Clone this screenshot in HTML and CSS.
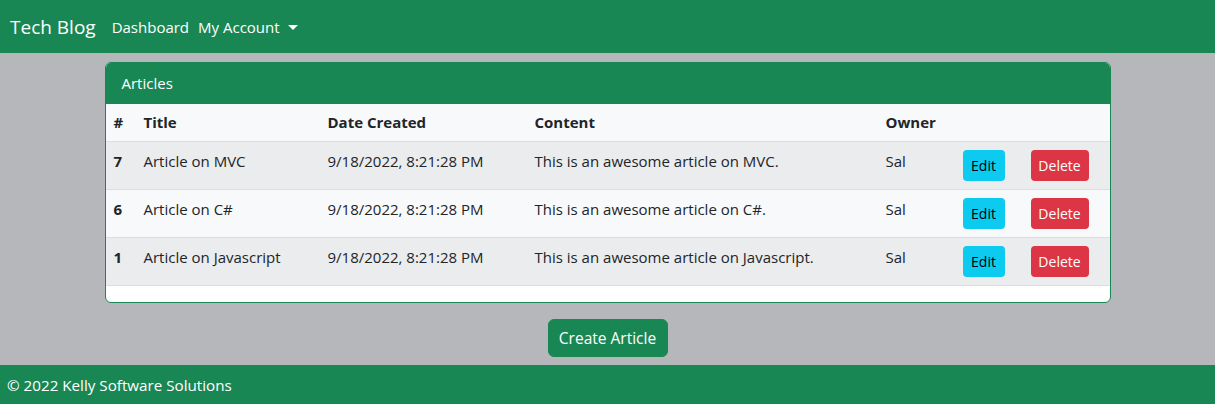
FILE: index.html
```html
<!DOCTYPE html>
<html lang="en">
<head>
<meta charset="utf-8">
<title>Tech Blog</title>
<link rel="stylesheet" href="styles.css">
</head>
<body>
<header class="navbar">
  <a class="brand" href="#">Tech Blog</a>
  <nav class="nav">
    <a class="nav-link" href="#">Dashboard</a>
    <a class="nav-link dropdown-toggle" href="#">My Account</a>
  </nav>
</header>
<main class="main">
  <section class="card">
    <div class="card-header">Articles</div>
    <table class="table">
      <colgroup>
        <col class="c1"><col class="c2"><col class="c3"><col class="c4"><col class="c5"><col class="c6"><col class="c7">
      </colgroup>
      <thead>
        <tr><th>#</th><th>Title</th><th>Date Created</th><th>Content</th><th>Owner</th><th></th><th></th></tr>
      </thead>
      <tbody>
        <tr class="odd"><td class="id">7</td><td>Article on MVC</td><td>9/18/2022, 8:21:28 PM</td><td>This is an awesome article on MVC.</td><td>Sal</td><td class="act"><button class="btn-sm btn-info">Edit</button></td><td class="act"><button class="btn-sm btn-danger">Delete</button></td></tr>
        <tr><td class="id">6</td><td>Article on C#</td><td>9/18/2022, 8:21:28 PM</td><td>This is an awesome article on C#.</td><td>Sal</td><td class="act"><button class="btn-sm btn-info">Edit</button></td><td class="act"><button class="btn-sm btn-danger">Delete</button></td></tr>
        <tr class="odd"><td class="id">1</td><td>Article on Javascript</td><td>9/18/2022, 8:21:28 PM</td><td>This is an awesome article on Javascript.</td><td>Sal</td><td class="act"><button class="btn-sm btn-info">Edit</button></td><td class="act"><button class="btn-sm btn-danger">Delete</button></td></tr>
      </tbody>
    </table>
  </section>
  <div class="actions">
    <button class="btn-primary">Create Article</button>
  </div>
</main>
<footer class="footer">© 2022 Kelly Software Solutions</footer>
</body>
</html>
```

FILE: styles.css
```css
* { box-sizing: border-box; }
html, body { height: 100%; }
body {
  margin: 0;
  background: #b5b7bb;
  font-family: "Open Sans", "Noto Sans", sans-serif;
  font-size: 15px;
  line-height: 24px;
  color: #212529;
  display: flex;
  flex-direction: column;
}
a { text-decoration: none; color: inherit; }

.navbar {
  height: 53px;
  background: #198754;
  display: flex;
  align-items: center;
  padding: 0 10px;
  color: #fff;
}
.brand { font-size: 19px; margin-right: 16px; line-height: 30px; }
.nav { display: flex; gap: 9px; }
.nav-link { color: #fff; font-size: 15px; }
.dropdown-toggle::after {
  content: "";
  display: inline-block;
  margin-left: 8px;
  vertical-align: 3px;
  border-top: 5px solid #fff;
  border-left: 5px solid transparent;
  border-right: 5px solid transparent;
}

.main {
  flex: 1;
  padding-top: 9px;
}
.card {
  width: 1006px;
  margin: 0 auto;
  border: 1px solid #198754;
  border-radius: 6px;
  background: #fff;
  overflow: hidden;
  padding-bottom: 16px;
}
.card-header {
  background: #198754;
  color: #fff;
  padding: 8px 16px;
  height: 41px;
  border-bottom: 1px solid #198754;
}
.table {
  width: 100%;
  border-collapse: collapse;
  table-layout: fixed;
}
.c1 { width: 30px; } .c2 { width: 184px; } .c3 { width: 207px; } .c4 { width: 351px; }
.c5 { width: 77px; } .c6 { width: 68px; } .c7 { width: 87px; }
th, td {
  text-align: left;
  vertical-align: top;
  border-bottom: 1px solid #dcdddf;
  white-space: nowrap;
}
th { font-weight: 700; padding: 6px 8px; height: 37px; }
thead tr { background: #f8f9fa; }
td { padding: 7px 8px 9px; height: 48px; }
td.act { padding: 8px; }
tbody tr { background: #f8f9fa; }
tbody tr.odd { background: #ebeced; }
td.id { font-weight: 700; }

.btn-sm {
  display: block;
  font-family: inherit;
  font-size: 14px;
  line-height: 21px;
  height: 31px;
  border: 1px solid transparent;
  border-radius: 4px;
  cursor: pointer;
}
.btn-info { background: #0dcaf0; color: #000; width: 42px; padding: 4px 0; }
.btn-danger { background: #dc3545; color: #fff; width: 58px; padding: 4px 0; }

.actions {
  display: flex;
  justify-content: center;
  padding-top: 16px;
}
.btn-primary {
  font-family: inherit;
  font-size: 15.5px;
  line-height: 24px;
  height: 38px;
  width: 120px;
  padding: 6px 0;
  background: #198754;
  color: #fff;
  border: 1px solid #198754;
  border-radius: 6px;
  cursor: pointer;
}

.footer {
  height: 39px;
  background: #198754;
  color: #fff;
  padding: 8px 7px 7px;
  font-size: 15.2px;
}
```
